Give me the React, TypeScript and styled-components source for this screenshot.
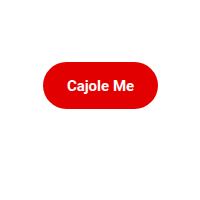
import React from 'react'
import styled, { createGlobalStyle } from 'styled-components'

const GlobalStyle = createGlobalStyle`
    body {
        margin: 0;
        background: #ffffff;
        font-family: Roboto, 'Liberation Sans', sans-serif;
    }
`

const Page = styled.div`
    display: flex;
    justify-content: center;
    padding-top: 62px;
    padding-left: 1px;
`

const CajoleButton = styled.button`
    width: 115px;
    height: 47px;
    border: none;
    border-radius: 24px;
    background-color: #e30000;
    color: #ffffff;
    font-family: Roboto, 'Liberation Sans', sans-serif;
    font-size: 15px;
    font-weight: 700;
    cursor: pointer;
    padding: 0;
`

const App = () => {
  return (
    <>
        <GlobalStyle />
        <Page>
            <CajoleButton>Cajole Me</CajoleButton>
        </Page>
    </>
  )
}

export default App
